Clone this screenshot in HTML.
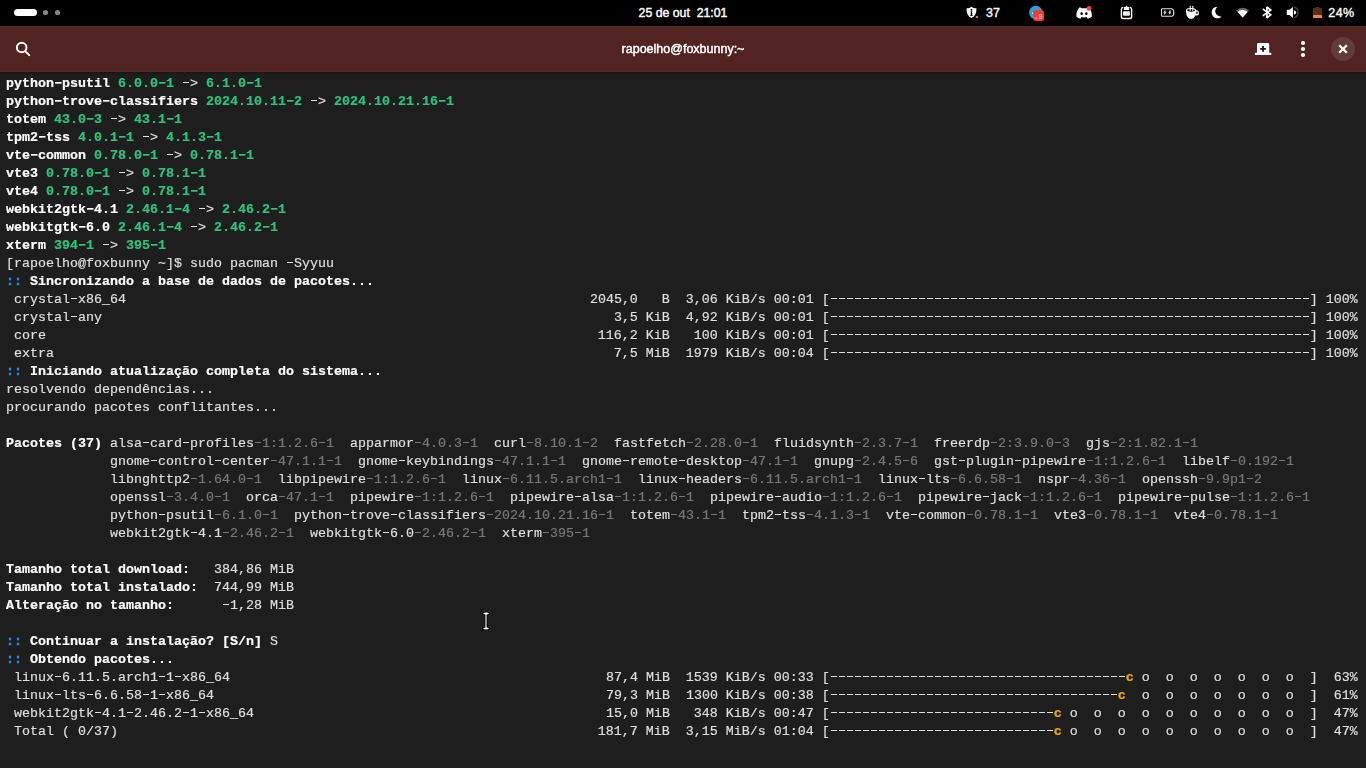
<!DOCTYPE html>
<html><head><meta charset="utf-8"><title>rapoelho@foxbunny:~</title>
<style>
html,body{margin:0;padding:0;width:1366px;height:768px;overflow:hidden;background:#1e1e1e;}
body{position:relative;font-family:"Liberation Sans",sans-serif;}
#term,#title{will-change:transform;}
#top{position:absolute;left:0;top:0;width:1366px;height:26px;background:#000;}
#hdr{position:absolute;left:0;top:26px;width:1366px;height:46px;background:#512323;}
#hsh{position:absolute;left:0;top:73px;width:1366px;height:3px;background:linear-gradient(rgba(0,0,0,.13),rgba(0,0,0,0));}
#hline{position:absolute;left:0;top:71px;width:1366px;height:1px;background:#562626;border-bottom:1px solid #161818;}
#clock{position:absolute;left:583px;top:0;width:200px;height:26px;line-height:26px;text-align:center;color:#fff;font-size:12.3px;font-weight:normal;-webkit-text-stroke:0.4px #fff;}
#title{position:absolute;left:482.5px;top:25.5px;width:400px;height:46px;line-height:46px;text-align:center;color:#fff;font-size:12.5px;font-weight:normal;-webkit-text-stroke:0.45px #fff;}
.tt{position:absolute;color:#fff;font-size:12.5px;font-weight:normal;-webkit-text-stroke:0.35px #fff;line-height:26px;top:0;}
#term{position:absolute;left:6px;top:75px;margin:0;font-family:"Liberation Mono",monospace;font-size:13.33px;line-height:18px;color:#dedede;white-space:pre;letter-spacing:0;-webkit-text-stroke:0.2px currentColor;}
#term b{color:#fff;font-weight:bold;}
#term b.g{color:#2ec27e;}
#term b.bl{color:#3584e4;-webkit-text-stroke:0.5px #3584e4;}
#term b.y{color:#e9ad0c;}
#term .d{color:#777;}
#term i{font-style:normal;display:inline-block;height:18px;vertical-align:top;-webkit-text-fill-color:transparent;-webkit-text-stroke:0;background:linear-gradient(currentColor,currentColor) no-repeat 0.8px 7px/6.3px 1.3px;}
#term b i{background-position:0.7px 6.9px;background-size:6.5px 1.7px;}
#term .ds{display:inline-block;height:18px;vertical-align:top;color:transparent;-webkit-text-stroke:0;background-image:repeating-linear-gradient(90deg,rgba(222,222,222,0) 0,rgba(222,222,222,0) 0.8px,#dedede 0.8px,#dedede 7.1px,rgba(222,222,222,0) 7.1px,rgba(222,222,222,0) 8px);background-size:100% 1.3px;background-position:0 7px;background-repeat:no-repeat;}
svg{position:absolute;overflow:visible;}
</style></head><body>
<div id="top"></div>
<div id="hdr"></div>
<div id="hline"></div>
<div id="hsh"></div>
<div id="clock">25 de out&nbsp; 21:01</div>
<div id="title">rapoelho@foxbunny:~</div>
<!-- top bar left: workspace indicator -->
<svg style="left:0;top:0" width="80" height="26"><rect x="14" y="9" width="23" height="7" rx="3.5" fill="#fff"/><circle cx="45.5" cy="12.5" r="2.6" fill="#858585"/><circle cx="57.5" cy="12.5" r="2.6" fill="#858585"/></svg>
<!-- header: search -->
<svg style="left:0;top:26px" width="60" height="46"><circle cx="21.7" cy="21.5" r="4.8" fill="none" stroke="#fff" stroke-width="2"/><path d="M25.2 25.2 L29.3 29.1" stroke="#fff" stroke-width="2" stroke-linecap="round"/></svg>
<!-- header right: new tab, menu, close -->
<svg style="left:1240px;top:26px" width="126" height="46">
<path d="M18.4 16.9 h9.4 a1.4 1.4 0 0 1 1.4 1.4 v8.5 h1.4 a.8 .8 0 0 1 .8 .8 v.7 a.8 .8 0 0 1 -.8 .8 h-15 a.8 .8 0 0 1 -.8 -.8 v-.7 a.8 .8 0 0 1 .8 -.8 h1.4 v-8.5 a1.4 1.4 0 0 1 1.4 -1.4 z" fill="#fff"/>
<path d="M23 20 v5.800 M20.100 22.900 h5.800" stroke="#3b0d0d" stroke-width="1.900"/>
<circle cx="63" cy="17" r="2.100" fill="#fff"/><circle cx="63" cy="23" r="2.100" fill="#fff"/><circle cx="63" cy="29" r="2.100" fill="#fff"/>
<circle cx="103" cy="23" r="12" fill="#643b3b"/>
<path d="M99.200 19.200 l7.600 7.600 M106.800 19.200 l-7.600 7.600" stroke="#fff" stroke-width="2.300"/>
</svg>
<!-- top bar right status icons -->
<svg style="left:955px;top:0" width="411" height="26">
<!-- shield -->
<path d="M16.500 6.700 c1.400 1.100 2.900 1.600 4.900 1.600 c.3 4.800 -1.300 8 -4.900 9.800 c-3.600 -1.800 -5.200 -5 -4.900 -9.800 c2 0 3.500 -.5 4.900 -1.600 z" fill="#fff"/>
<circle cx="16.500" cy="9.700" r="0.95" fill="#000"/><path d="M15.700 11.300 h1.500 v3.800 h.4 v.8 h-2.300 v-.8 h.5 v-3 h-.5 z" fill="#000"/>
<rect x="20.800" y="16" width="2.100" height="2.100" rx="0.500" fill="#f5803c"/>
<!-- telegram -->
<circle cx="80.800" cy="12.400" r="6.700" fill="#2aa1db"/>
<circle cx="77.500" cy="13.200" r="0.700" fill="#fff"/>
<rect x="78.400" y="10.200" width="10.600" height="10.900" rx="2.200" fill="#ee3b36"/>
<text x="83.600" y="18.900" font-family="Liberation Sans, sans-serif" font-size="7.200" fill="#ffe0e0">9</text>
<rect x="79.400" y="17.700" width="3.400" height="0.900" fill="#f8a5a2"/>
<!-- discord -->
<path d="M124.300 7.600 C125.500 7.400 126.300 7.600 127 8.300 C128.400 8.100 129.800 8.100 131.200 8.300 C131.900 7.600 132.700 7.400 133.900 7.600 C135.900 10 137.100 13.200 136.900 16.400 C135.700 17.500 134.200 18.300 132.700 18.700 L131.700 17.100 C130 17.600 128.200 17.600 126.500 17.100 L125.500 18.700 C124 18.300 122.500 17.500 121.300 16.400 C121.100 13.200 122.300 10 124.300 7.600 Z" fill="#fff"/>
<ellipse cx="126.600" cy="13.700" rx="1.250" ry="1.400" fill="#000"/><ellipse cx="131.300" cy="13.700" rx="1.250" ry="1.400" fill="#000"/>
<circle cx="134" cy="8.400" r="2.400" fill="#f04548"/>
<!-- clipboard -->
<path d="M167.7 7.4 Q166.4 7.9 166.4 9.4 V16.7 Q166.4 18.5 168.2 18.5 H174.8 Q176.6 18.5 176.6 16.7 V9.4 Q176.6 7.9 175.3 7.4" fill="none" stroke="#fff" stroke-width="1.4" stroke-linecap="round"/>
<path d="M168.800 10 v-2.600 q0 -.5 .5 -.5 h1.200 q.2 -1.100 1 -1.100 q.8 0 1 1.100 h1.200 q.5 0 .5 .5 v2.600 z" fill="#fff"/>
<rect x="168" y="11.200" width="6.900" height="4.500" rx="1" fill="#f2f2f2"/>
<!-- power profile battery -->
<path d="M207.300 8.800 h9.700 l1.600 1.500 v4.500 l-1.600 1.500 h-9.700 q-.8 0 -.8 -.8 v-5.900 q0 -.8 .8 -.8 z" fill="none" stroke="#dedede" stroke-width="1.100" stroke-linejoin="round"/>
<path d="M210.1 10.4 l-1.300 2.300 h1.100 l-.4 1.600 l1.500 -2.400 h-1.100 z M215.100 10.400 l-1.300 2.300 h1.100 l-.4 1.600 l1.500 -2.400 h-1.100 z" fill="#d8d8d8" stroke="#d8d8d8" stroke-width="0.700" stroke-linejoin="round"/>
<!-- coffee cup -->
<ellipse cx="241.500" cy="12.900" rx="2.400" ry="2.700" fill="#fff"/><ellipse cx="242" cy="12.800" rx="0.750" ry="1.250" fill="#000"/>
<path d="M231 10.200 C231 15 232.500 18.700 235 18.700 h2 C239.500 18.700 241 15 241 10.200 A5 2.200 0 0 0 231 10.200 Z" fill="#fff"/>
<ellipse cx="236" cy="10.300" rx="3.900" ry="1.350" fill="#111"/>
<path d="M235.700 6 c-1.700 1.500 .9 2.300 -.9 4.700 M238.300 6 c-1.700 1.500 .9 2.300 -.9 4.700" stroke="#fff" stroke-width="1.100" fill="none"/>
<!-- moon -->
<path d="M262.600 6.800 C258.500 6.800 256.700 9.800 256.700 12.400 C256.700 15.800 259.300 18.300 262.600 18.300 C264.200 18.300 265.600 17.600 266.500 16.400 C262.500 16.800 259.800 13.600 260.300 10.600 C260.500 9 261.300 7.700 262.600 6.800 Z" fill="#fff"/>
<!-- wifi -->
<path d="M281.200 10.400 a9.300 9.300 0 0 1 12.800 0 l-6.400 7 z" fill="#6a6a6a"/>
<path d="M282.700 11.900 a7.100 7.100 0 0 1 9.800 0 l-4.900 5.500 z" fill="#fff"/>
<!-- bluetooth -->
<path d="M307.800 8.900 L315.700 14.800 L311.900 17.800 V7 L315.700 10 L307.800 15.900" fill="none" stroke="#fff" stroke-width="1.700" stroke-linejoin="miter" stroke-miterlimit="2"/>
<!-- volume -->
<path d="M331.800 9.700 h2.700 l3.400 -2.800 v11 l-3.400 -2.800 h-2.700 z" fill="#fff"/>
<path d="M338.900 10.300 C340.500 10.800 341.200 11.600 341.200 12.400 C341.200 13.300 340.500 14.100 338.900 14.600 Z" fill="#fff"/>
<path d="M338.900 7.100 A5.480 5.480 0 0 1 338.900 17.700" fill="none" stroke="#3e3e3e" stroke-width="1.500"/>
<!-- battery -->
<rect x="360.800" y="6.900" width="3.400" height="1.600" rx="0.400" fill="#5c2d18"/>
<rect x="358" y="7.900" width="9" height="10.200" rx="0.800" fill="#5c2d18"/>
<rect x="358" y="15.100" width="9" height="3" rx="0.500" fill="#ff8040"/>
</svg>
<div class="tt" style="left:986px">37</div>
<div class="tt" style="left:1328.3px;letter-spacing:0.45px">24%</div>
<!-- mouse I-beam -->
<svg style="left:480px;top:610px" width="12" height="22"><path d="M3.300 3.500 h5.400 M6 3.500 v15 M3.300 18.500 h5.400" fill="none" stroke="#000" stroke-width="3" stroke-linecap="round"/><rect x="5" y="4" width="2" height="14" fill="#909090"/><ellipse cx="6" cy="3.500" rx="2.800" ry="0.900" fill="#fff"/><ellipse cx="6" cy="18.500" rx="2.800" ry="0.900" fill="#fff"/></svg>

<pre id="term"><b>python<i>-</i>psutil</b> <b class="g">6.0.0<i>-</i>1</b> <i>-</i>&gt; <b class="g">6.1.0<i>-</i>1</b>
<b>python<i>-</i>trove<i>-</i>classifiers</b> <b class="g">2024.10.11<i>-</i>2</b> <i>-</i>&gt; <b class="g">2024.10.21.16<i>-</i>1</b>
<b>totem</b> <b class="g">43.0<i>-</i>3</b> <i>-</i>&gt; <b class="g">43.1<i>-</i>1</b>
<b>tpm2<i>-</i>tss</b> <b class="g">4.0.1<i>-</i>1</b> <i>-</i>&gt; <b class="g">4.1.3<i>-</i>1</b>
<b>vte<i>-</i>common</b> <b class="g">0.78.0<i>-</i>1</b> <i>-</i>&gt; <b class="g">0.78.1<i>-</i>1</b>
<b>vte3</b> <b class="g">0.78.0<i>-</i>1</b> <i>-</i>&gt; <b class="g">0.78.1<i>-</i>1</b>
<b>vte4</b> <b class="g">0.78.0<i>-</i>1</b> <i>-</i>&gt; <b class="g">0.78.1<i>-</i>1</b>
<b>webkit2gtk<i>-</i>4.1</b> <b class="g">2.46.1<i>-</i>4</b> <i>-</i>&gt; <b class="g">2.46.2<i>-</i>1</b>
<b>webkitgtk<i>-</i>6.0</b> <b class="g">2.46.1<i>-</i>4</b> <i>-</i>&gt; <b class="g">2.46.2<i>-</i>1</b>
<b>xterm</b> <b class="g">394<i>-</i>1</b> <i>-</i>&gt; <b class="g">395<i>-</i>1</b>
[rapoelho@foxbunny ~]$ sudo pacman <i>-</i>Syyuu
<b class="bl">::</b><b> Sincronizando a base de dados de pacotes...</b>
 crystal<i>-</i>x86_64                                                          2045,0   B  3,06 KiB/s 00:01 [<span class="ds">------------------------------------------------------------</span>] 100%
 crystal<i>-</i>any                                                                3,5 KiB  4,92 KiB/s 00:01 [<span class="ds">------------------------------------------------------------</span>] 100%
 core                                                                     116,2 KiB   100 KiB/s 00:01 [<span class="ds">------------------------------------------------------------</span>] 100%
 extra                                                                      7,5 MiB  1979 KiB/s 00:04 [<span class="ds">------------------------------------------------------------</span>] 100%
<b class="bl">::</b><b> Iniciando atualização completa do sistema...</b>
resolvendo dependências...
procurando pacotes conflitantes...

<b>Pacotes (37)</b> alsa<i>-</i>card<i>-</i>profiles<span class="d"><i>-</i>1:1.2.6<i>-</i>1</span>  apparmor<span class="d"><i>-</i>4.0.3<i>-</i>1</span>  curl<span class="d"><i>-</i>8.10.1<i>-</i>2</span>  fastfetch<span class="d"><i>-</i>2.28.0<i>-</i>1</span>  fluidsynth<span class="d"><i>-</i>2.3.7<i>-</i>1</span>  freerdp<span class="d"><i>-</i>2:3.9.0<i>-</i>3</span>  gjs<span class="d"><i>-</i>2:1.82.1<i>-</i>1</span>
             gnome<i>-</i>control<i>-</i>center<span class="d"><i>-</i>47.1.1<i>-</i>1</span>  gnome<i>-</i>keybindings<span class="d"><i>-</i>47.1.1<i>-</i>1</span>  gnome<i>-</i>remote<i>-</i>desktop<span class="d"><i>-</i>47.1<i>-</i>1</span>  gnupg<span class="d"><i>-</i>2.4.5<i>-</i>6</span>  gst<i>-</i>plugin<i>-</i>pipewire<span class="d"><i>-</i>1:1.2.6<i>-</i>1</span>  libelf<span class="d"><i>-</i>0.192<i>-</i>1</span>
             libnghttp2<span class="d"><i>-</i>1.64.0<i>-</i>1</span>  libpipewire<span class="d"><i>-</i>1:1.2.6<i>-</i>1</span>  linux<span class="d"><i>-</i>6.11.5.arch1<i>-</i>1</span>  linux<i>-</i>headers<span class="d"><i>-</i>6.11.5.arch1<i>-</i>1</span>  linux<i>-</i>lts<span class="d"><i>-</i>6.6.58<i>-</i>1</span>  nspr<span class="d"><i>-</i>4.36<i>-</i>1</span>  openssh<span class="d"><i>-</i>9.9p1<i>-</i>2</span>
             openssl<span class="d"><i>-</i>3.4.0<i>-</i>1</span>  orca<span class="d"><i>-</i>47.1<i>-</i>1</span>  pipewire<span class="d"><i>-</i>1:1.2.6<i>-</i>1</span>  pipewire<i>-</i>alsa<span class="d"><i>-</i>1:1.2.6<i>-</i>1</span>  pipewire<i>-</i>audio<span class="d"><i>-</i>1:1.2.6<i>-</i>1</span>  pipewire<i>-</i>jack<span class="d"><i>-</i>1:1.2.6<i>-</i>1</span>  pipewire<i>-</i>pulse<span class="d"><i>-</i>1:1.2.6<i>-</i>1</span>
             python<i>-</i>psutil<span class="d"><i>-</i>6.1.0<i>-</i>1</span>  python<i>-</i>trove<i>-</i>classifiers<span class="d"><i>-</i>2024.10.21.16<i>-</i>1</span>  totem<span class="d"><i>-</i>43.1<i>-</i>1</span>  tpm2<i>-</i>tss<span class="d"><i>-</i>4.1.3<i>-</i>1</span>  vte<i>-</i>common<span class="d"><i>-</i>0.78.1<i>-</i>1</span>  vte3<span class="d"><i>-</i>0.78.1<i>-</i>1</span>  vte4<span class="d"><i>-</i>0.78.1<i>-</i>1</span>
             webkit2gtk<i>-</i>4.1<span class="d"><i>-</i>2.46.2<i>-</i>1</span>  webkitgtk<i>-</i>6.0<span class="d"><i>-</i>2.46.2<i>-</i>1</span>  xterm<span class="d"><i>-</i>395<i>-</i>1</span>

<b>Tamanho total download: </b>  384,86 MiB
<b>Tamanho total instalado:</b>  744,99 MiB
<b>Alteração no tamanho:   </b>   <i>-</i>1,28 MiB

<b class="bl">::</b><b> Continuar a instalação? [S/n]</b> S
<b class="bl">::</b><b> Obtendo pacotes...</b>
 linux<i>-</i>6.11.5.arch1<i>-</i>1<i>-</i>x86_64                                               87,4 MiB  1539 KiB/s 00:33 [<span class="ds">-------------------------------------</span><b class="y">c</b> o  o  o  o  o  o  o  ]  63%
 linux<i>-</i>lts<i>-</i>6.6.58<i>-</i>1<i>-</i>x86_64                                                 79,3 MiB  1300 KiB/s 00:38 [<span class="ds">------------------------------------</span><b class="y">c</b>  o  o  o  o  o  o  o  ]  61%
 webkit2gtk<i>-</i>4.1<i>-</i>2.46.2<i>-</i>1<i>-</i>x86_64                                            15,0 MiB   348 KiB/s 00:47 [<span class="ds">----------------------------</span><b class="y">c</b> o  o  o  o  o  o  o  o  o  o  ]  47%
 Total ( 0/37)                                                            181,7 MiB  3,15 MiB/s 01:04 [<span class="ds">----------------------------</span><b class="y">c</b> o  o  o  o  o  o  o  o  o  o  ]  47%</pre>
</body></html>
